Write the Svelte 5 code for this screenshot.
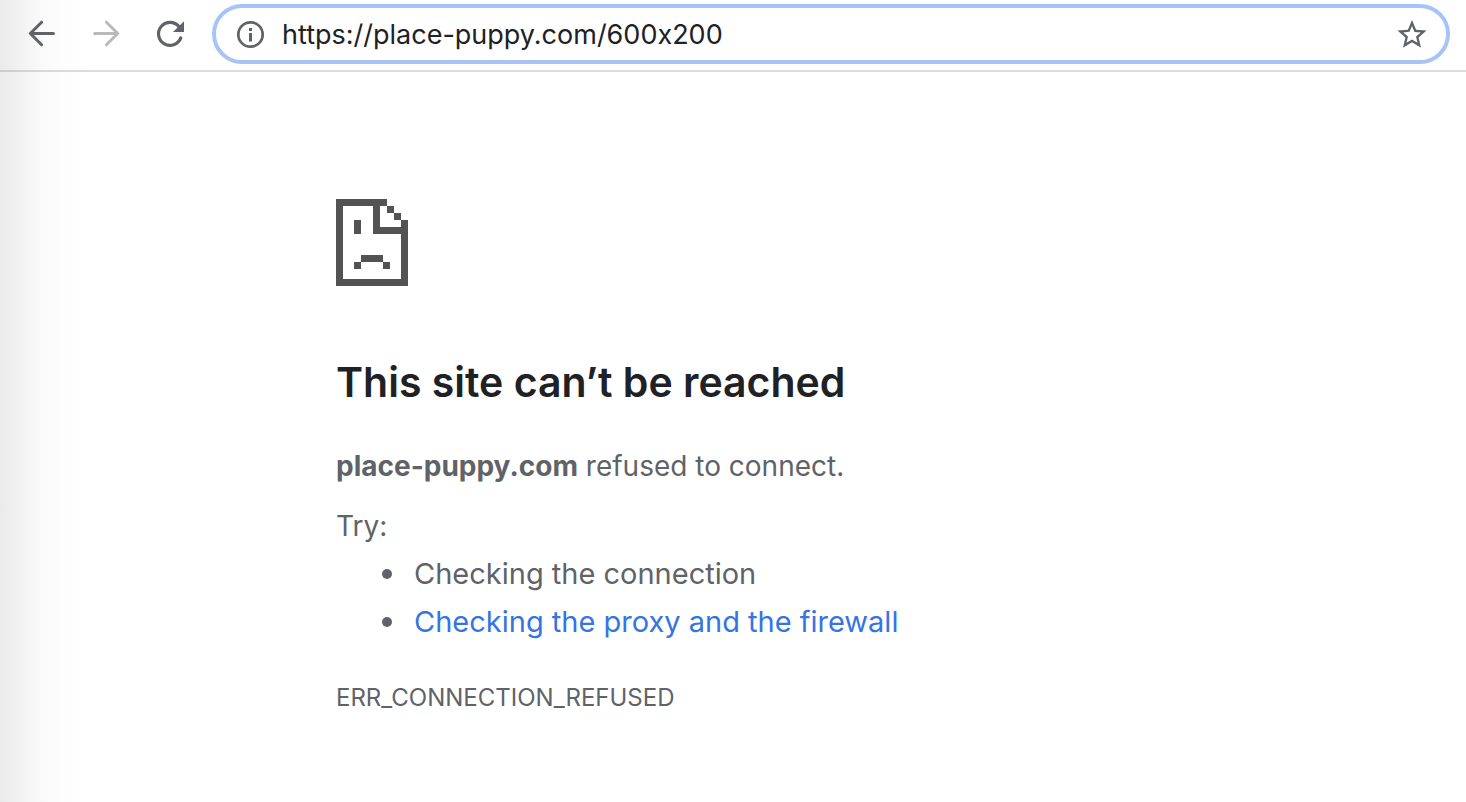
<script>
  let url = $state('https://place-puppy.com/600x200');
  const host = 'place-puppy.com';
</script>

<svelte:head>
  <title>{host}</title>
</svelte:head>

<div class="window">
  <header class="toolbar">
    <nav class="nav" aria-label="History">
      <button type="button" aria-label="Back">
        <svg viewBox="0 0 32 32" fill="none" stroke="#5f6368" stroke-width="3" stroke-linecap="round" stroke-linejoin="round">
          <path d="M27.4 15.5H4.6M15.6 4.2L4.3 15.5l11.3 11.3" />
        </svg>
      </button>
      <button type="button" aria-label="Forward" disabled>
        <svg viewBox="0 0 32 32" fill="none" stroke="#bababa" stroke-width="3" stroke-linecap="round" stroke-linejoin="round">
          <path d="M4.6 15.5h22.8M16.4 4.2l11.3 11.3-11.3 11.3" />
        </svg>
      </button>
      <button type="button" aria-label="Reload">
        <svg viewBox="0 0 32 32" fill="none">
          <path d="M25.4 9.2A11.5 11.5 0 1 0 26.8 19.9" stroke="#5f6368" stroke-width="3.2" stroke-linecap="round" />
          <path d="M30 3.2V14H19z" fill="#5f6368" />
        </svg>
      </button>
    </nav>
    <form class="omnibox" onsubmit={(e) => e.preventDefault()}>
      <button type="button" aria-label="View site information">
        <svg viewBox="0 0 32 32" fill="none">
          <circle cx="16.5" cy="16.5" r="12.2" stroke="#5f6368" stroke-width="2.7" />
          <path d="M16.5 10v3M16.5 15v8.5" stroke="#5f6368" stroke-width="3" />
        </svg>
      </button>
      <input type="text" aria-label="Address" spellcheck="false" bind:value={url} />
      <button type="button" aria-label="Bookmark this page">
        <svg viewBox="1 0.6 22 22" fill="#5f6368">
          <path d="M22 9.24l-7.19-.62L12 2 9.19 8.63 2 9.24l5.46 4.73L5.82 21 12 17.27 18.18 21l-1.63-7.03L22 9.24zM12 15.4l-3.76 2.27 1-4.28-3.32-2.88 4.38-.38L12 6.1l1.71 4.04 4.38.38-3.32 2.88 1 4.28L12 15.4z" />
        </svg>
      </button>
    </form>
  </header>

  <main>
    <svg class="sad" viewBox="0 0 72 87" shape-rendering="crispEdges" fill="#535353" aria-hidden="true">
      <path d="M0 0H51V7H44V28H65V21H72V87H0ZM7 7V80H65V35H37V7Z" fill-rule="evenodd" />
      <path d="M51 7h7v7h-7zM58 14h7v7h-7zM18 21h7v14h-7zM25 56h22v7H25zM18 63h7v7h-7zM47 63h7v7h-7z" />
    </svg>
    <h1>This site can’t be reached</h1>
    <p class="summary"><strong>{host}</strong> refused to connect.</p>
    <p class="try">Try:</p>
    <ul>
      <li>Checking the connection</li>
      <li><a href="#buttons">Checking the proxy and the firewall</a></li>
    </ul>
    <p class="code">ERR_CONNECTION_REFUSED</p>
  </main>
</div>

<style>
  :global(body) {
    margin: 0;
    background: #fff;
  }

  .window {
    min-height: 100vh;
    background: linear-gradient(to right, #ebebeb 0, #f1f1f1 18px, #f8f8f8 36px, #fcfcfc 54px, #fefefe 72px, #fff 90px);
    font-family: Inter, 'Liberation Sans', sans-serif;
    color: #5f6368;
  }

  .toolbar {
    display: flex;
    align-items: center;
    gap: 26px;
    padding: 4px 16px 6px 26px;
    border-bottom: 2px solid rgba(60, 60, 80, 0.18);
  }

  .nav {
    display: flex;
    gap: 32px;
  }

  button {
    display: block;
    flex: none;
    width: 32px;
    height: 32px;
    padding: 0;
    border: 0;
    background: none;
  }

  button svg {
    display: block;
    width: 32px;
    height: 32px;
  }

  .omnibox {
    box-sizing: border-box;
    display: flex;
    flex: 1;
    align-items: center;
    gap: 16px;
    min-width: 0;
    height: 60px;
    padding: 0 18px;
    border: 4px solid #a8c3f8;
    border-radius: 30px;
    background: #fff;
  }

  input {
    flex: 1;
    min-width: 0;
    padding: 2px 0 0;
    border: 0;
    outline: 0;
    background: none;
    font: 400 27px/36px Inter, 'Liberation Sans', sans-serif;
    font-feature-settings: 'calt' 0;
    color: #202124;
  }

  main {
    max-width: 1040px;
    padding: 127px 32px 40px 336px;
  }

  .sad {
    display: block;
    width: 72px;
    height: 87px;
  }

  h1 {
    margin: 68px 0 0;
    font-size: 41px;
    line-height: 56px;
    font-weight: 600;
    color: #202124;
  }

  p {
    margin: 0;
  }

  .summary,
  .try {
    font-size: 28px;
    line-height: 48px;
  }

  .summary {
    margin-top: 32px;
  }

  .try {
    margin-top: 12px;
  }

  ul {
    margin: 0;
    padding: 0 0 0 46px;
    list-style: none;
  }

  li {
    display: flex;
    align-items: center;
    gap: 22px;
    font-size: 29px;
    line-height: 48px;
  }

  li::before {
    content: '';
    flex: none;
    width: 10px;
    height: 10px;
    border-radius: 50%;
    background: #5f6368;
  }

  a {
    color: #3574e2;
    text-decoration: none;
  }

  .code {
    margin-top: 36px;
    font-size: 24px;
    line-height: 32px;
  }
</style>
